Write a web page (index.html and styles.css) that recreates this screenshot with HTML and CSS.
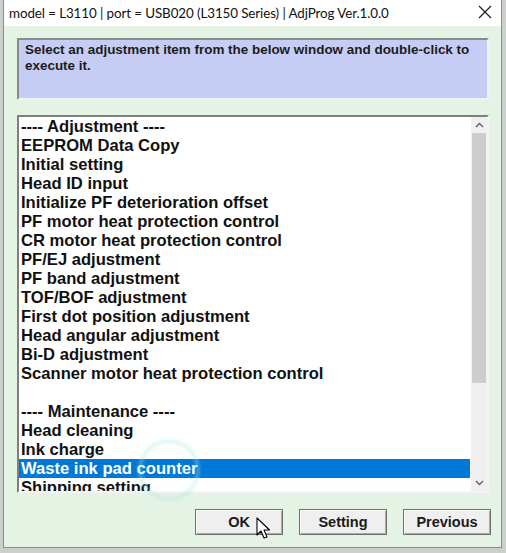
FILE: index.html
```html
<!DOCTYPE html>
<html lang="en">
<head>
    <meta charset="UTF-8">
    <meta name="viewport" content="width=device-width, initial-scale=1.0">
    <title>AdjProg</title>
    <link rel="stylesheet" href="styles.css">
</head>
<body>
    <div class="window">
        <!-- Title bar -->
        <div class="titlebar">
            <span class="title">model = L3110 | port = USB020 (L3150 Series) | AdjProg Ver.1.0.0</span>
            <svg class="close" width="14" height="14" viewBox="0 0 14 14">
                <path d="M1 1 L13 13 M13 1 L1 13" stroke="#222" stroke-width="1.3" fill="none"/>
            </svg>
        </div>

        <div class="client">
            <!-- Instruction box -->
            <div class="info">Select an adjustment item from the below window and double-click to execute it.</div>

            <!-- Item list -->
            <div class="listbox">
                <div class="items">
                    <div class="item">---- Adjustment ----</div>
                    <div class="item">EEPROM Data Copy</div>
                    <div class="item">Initial setting</div>
                    <div class="item">Head ID input</div>
                    <div class="item">Initialize PF deterioration offset</div>
                    <div class="item">PF motor heat protection control</div>
                    <div class="item">CR motor heat protection control</div>
                    <div class="item">PF/EJ adjustment</div>
                    <div class="item">PF band adjustment</div>
                    <div class="item">TOF/BOF adjustment</div>
                    <div class="item">First dot position adjustment</div>
                    <div class="item">Head angular adjustment</div>
                    <div class="item">Bi-D adjustment</div>
                    <div class="item">Scanner motor heat protection control</div>
                    <div class="item">&nbsp;</div>
                    <div class="item">---- Maintenance ----</div>
                    <div class="item">Head cleaning</div>
                    <div class="item">Ink charge</div>
                    <div class="item selected">Waste ink pad counter</div>
                    <div class="item">Shipping setting</div>
                </div>
                <div class="scrollbar">
                    <div class="sb-btn">
                        <svg width="9" height="6" viewBox="0 0 9 6"><path d="M1 5 L4.5 1.5 L8 5" stroke="#606060" stroke-width="1.4" fill="none"/></svg>
                    </div>
                    <div class="sb-thumb"></div>
                    <div class="sb-track"></div>
                    <div class="sb-btn">
                        <svg width="9" height="6" viewBox="0 0 9 6"><path d="M1 1 L4.5 4.5 L8 1" stroke="#606060" stroke-width="1.4" fill="none"/></svg>
                    </div>
                </div>
            </div>

            <!-- Dialog buttons -->
            <div class="buttons">
                <button class="btn">OK</button>
                <button class="btn">Setting</button>
                <button class="btn">Previous</button>
            </div>
        </div>

        <!-- click ripple and mouse pointer -->
        <div class="ripple"></div>
        <svg class="pointer" width="16" height="24" viewBox="0 0 16 24">
            <path d="M1 1 L1 18 L5 14 L8 21 L11 20 L8 13 L13.5 13 Z" fill="#fff" stroke="#000" stroke-width="1.1" stroke-linejoin="round"/>
        </svg>
    </div>
</body>
</html>
```

FILE: styles.css
```css
/* Reset */
* {
    margin: 0;
    padding: 0;
    box-sizing: border-box;
}
body {
    background-color: #cdcfcd;
    width: 506px;
    height: 553px;
    overflow: hidden;
}
/* Dialog window */
.window {
    position: relative;
    margin-left: 3px;
    width: 499px;
    height: 548px;
    background-color: #e4f3e4;
    border: 1px solid #8c8c8c;
    border-top: none;
}
.titlebar {
    height: 26px;
    background-color: #fff;
    display: flex;
    align-items: center;
    justify-content: space-between;
    padding: 0 9px 0 5px;
}
.title {
    font-family: Lato, "Noto Sans", sans-serif;
    font-size: 13.4px;
    letter-spacing: -0.1px;
    color: #111;
}
.close {
    margin-top: -2px;
}
.client {
    padding: 12px 12px 0 13px;
    display: flex;
    flex-direction: column;
}
/* Instruction box */
.info {
    height: 62px;
    background-color: #c5cdf4;
    border: 2px solid;
    border-color: #8a8a8a #eef0fa #eef0fa #8a8a8a;
    padding: 2px 12px 0 6px;
    font-family: "Liberation Sans", Arial, sans-serif;
    font-weight: bold;
    font-size: 13.45px;
    line-height: 16px;
    color: #1c1c1c;
}
/* Item list */
.listbox {
    margin-top: 15px;
    height: 378px;
    display: flex;
    background-color: #fff;
    border: 2px solid;
    border-color: #7f7f7f #f4f4f4 #f4f4f4 #7f7f7f;
}
.items {
    flex: 1;
    overflow: hidden;
}
.item {
    height: 19px;
    line-height: 19px;
    padding-left: 2px;
    font-family: "Liberation Sans", Arial, sans-serif;
    font-weight: bold;
    font-size: 16.6px;
    color: #111;
    white-space: nowrap;
}
.item.selected {
    background-color: #0078d7;
    color: #fff;
    margin-right: 1px;
}
.scrollbar {
    width: 16px;
    background-color: #f0f0f0;
    display: flex;
    flex-direction: column;
}
.sb-btn {
    height: 16px;
    display: flex;
    align-items: center;
    justify-content: center;
}
.sb-thumb {
    height: 250px;
    margin: 0 1px;
    background-color: #cdcdcd;
}
.sb-track {
    flex: 1;
}
/* Dialog buttons */
.buttons {
    display: flex;
    justify-content: flex-end;
    gap: 16px;
    margin-top: 16px;
    margin-right: -2px;
}
.btn {
    width: 88px;
    height: 26px;
    background-color: #efefef;
    border: 1px solid #707070;
    box-shadow: inset 1px 1px 0 #fff, inset -1px -1px 0 #a8a8a8;
    font-family: "Liberation Sans", Arial, sans-serif;
    font-weight: bold;
    font-size: 14.5px;
    color: #1a1a1a;
}
/* Overlays */
.ripple {
    position: absolute;
    left: 134px;
    top: 439px;
    width: 62px;
    height: 62px;
    border-radius: 50%;
    border: 4px solid rgba(170, 228, 228, 0.35);
    filter: blur(1.5px);
}
.pointer {
    position: absolute;
    left: 252px;
    top: 517px;
}
```
